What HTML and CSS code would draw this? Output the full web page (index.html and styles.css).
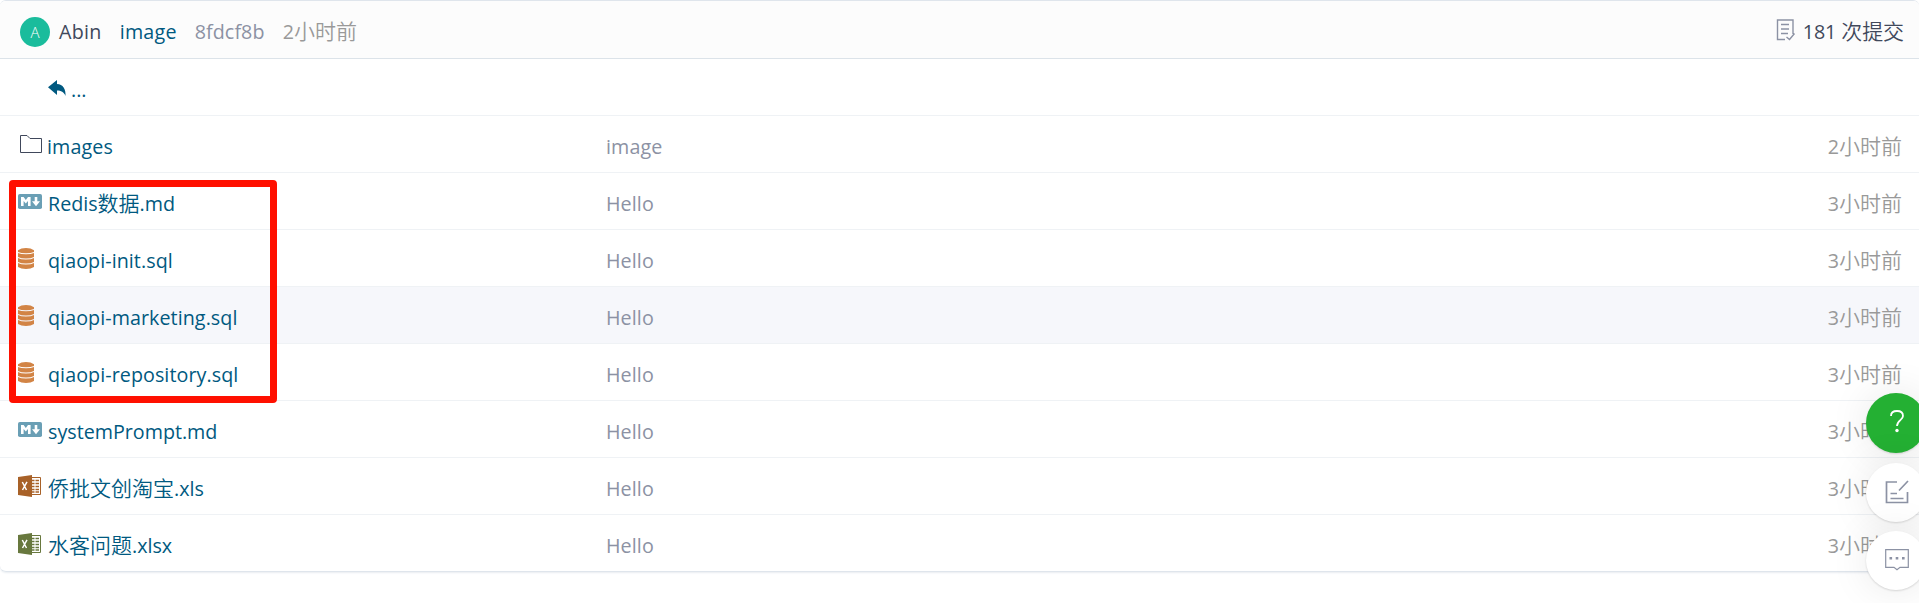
FILE: index.html
```html
<!DOCTYPE html>
<html lang="zh-CN">
<head>
<meta charset="utf-8">
<title>文件列表</title>
<link rel="stylesheet" href="styles.css">
</head>
<body>
<svg class="defs" width="0" height="0">
  <symbol id="md" viewBox="0 0 24 15"><rect width="24" height="15" rx="1.8" fill="#6a9fb5"/><path d="M3 12V3h2.6l2.2 3 2.2-3h2.6v9H10V7l-2.2 2.6L5.6 7v5zM16.700 3h2.600v4.300H22L18 12.300l-4-5h2.700z" fill="#fff"/></symbol>
  <symbol id="db" viewBox="0 0 16 21"><g fill="#d28445"><path d="M0 2.300Q3 0 8 0t8 2.300v1.700Q13 5.200 8 5.200T0 4z"/><path d="M0 5Q3 6.200 8 6.200T16 5v4Q13 10.500 8 10.500T0 9z"/><path d="M0 10Q3 11.500 8 11.500T16 10v4Q13 15.500 8 15.500T0 14z"/><path d="M0 15Q3 16.500 8 16.500T16 15v4Q13 21 8 21t-8-2z"/></g></symbol>
  <symbol id="xls" viewBox="0 0 23 22"><path d="M0 2 14 0v22L0 20z" fill="currentColor"/><path d="M14 2.500h8.500v17H14" fill="none" stroke="currentColor"/><path d="M14 5.500h2.500m1 0H21M14 8.500h2.500m1 0H21M14 11.500h2.500m1 0H21M14 14.500h2.500m1 0H21M14 17h2.500m1 0H21" stroke="currentColor" stroke-width="1.700"/><path d="m4.300 7 4.200 8M9 6.800 4.500 15" stroke="#fff" stroke-width="1.500"/></symbol>
</svg>
<main class="card">
  <header class="head">
    <span class="avatar">A</span>
    <span class="author">Abin</span>
    <a class="message">image</a>
    <span class="sha">8fdcf8b</span>
    <span class="ago">2<span class="cjk">小时前</span></span>
    <span class="commits">
      <svg width="20" height="22" viewBox="0 0 20 22" fill="none" stroke="#8c92a4" stroke-width="1.400"><path d="M17 15V1H1.500v19.500H9M5 5.500h8M5 10h8M5 14.500h7M10.500 18l3 2.500 5-6"/></svg>
      <span class="count">181 <span class="cjk">次提交</span></span>
    </span>
  </header>
  <div class="row up">
    <a class="name"><svg width="18" height="16" viewBox="0 0 18 16"><path d="M9 0v4c6 0 9 5 8.500 12C16 12 13 10.500 9 10.500V15L0 7.300z" fill="#005980"/></svg><span class="dots">...</span></a>
  </div>
  <div class="row"><a class="name"><svg class="icon folder" width="22" height="18" viewBox="0 0 22 18"><path d="M.5 17.500V.5H7l3 3h11.500v14z" fill="none" stroke="#40485b"/></svg><span>images</span></a><span class="note">image</span><span class="time">2<span class="cjk">小时前</span></span></div>
  <div class="row"><a class="name"><svg class="icon" width="24" height="15"><use href="#md"/></svg><span>Redis<span class="cjk">数据</span>.md</span></a><span class="note">Hello</span><span class="time">3<span class="cjk">小时前</span></span></div>
  <div class="row"><a class="name"><svg class="icon" width="16" height="21"><use href="#db"/></svg><span>qiaopi-init.sql</span></a><span class="note">Hello</span><span class="time">3<span class="cjk">小时前</span></span></div>
  <div class="row active"><a class="name"><svg class="icon" width="16" height="21"><use href="#db"/></svg><span>qiaopi-marketing.sql</span></a><span class="note">Hello</span><span class="time">3<span class="cjk">小时前</span></span></div>
  <div class="row"><a class="name"><svg class="icon" width="16" height="21"><use href="#db"/></svg><span>qiaopi-repository.sql</span></a><span class="note">Hello</span><span class="time">3<span class="cjk">小时前</span></span></div>
  <div class="row"><a class="name"><svg class="icon" width="24" height="15"><use href="#md"/></svg><span>systemPrompt.md</span></a><span class="note">Hello</span><span class="time">3<span class="cjk">小时前</span></span></div>
  <div class="row"><a class="name"><svg class="icon orange" width="23" height="22"><use href="#xls"/></svg><span><span class="cjk">侨批文创淘宝</span>.xls</span></a><span class="note">Hello</span><span class="time">3<span class="cjk">小时前</span></span></div>
  <div class="row"><a class="name"><svg class="icon olive" width="23" height="22"><use href="#xls"/></svg><span><span class="cjk">水客问题</span>.xlsx</span></a><span class="note">Hello</span><span class="time">3<span class="cjk">小时前</span></span></div>
</main>
<div class="highlight"></div>
<aside class="tools">
  <button class="tool help"><svg width="14" height="23" viewBox="0 0 14 23"><path d="M1 6C1 2.800 3.500 1 7 1s6 1.800 6 5c0 4-6 4.500-6 10" fill="none" stroke="#fff" stroke-width="1.800"/><circle cx="7" cy="20.500" r="1.700" fill="#fff"/></svg></button>
  <button class="tool"><svg width="24" height="24" viewBox="0 0 24 24" fill="none" stroke="#8c92a4" stroke-width="1.700"><path d="M12 2H1.500v20.500h21V12M5.500 13.500H12M5.500 18.500h13M14 10.500 23 1"/></svg></button>
  <button class="tool"><svg width="24" height="22" viewBox="0 0 24 22"><path d="M.7.7h22.600v17.600H15l-3 2.500-3-2.500H.7z" fill="none" stroke="#8c92a4" stroke-width="1.200"/><path d="M4.500 8h2.600v2.600H4.500zM10.700 8h2.600v2.600h-2.600zM17 8h2.600v2.600H17z" fill="#8c92a4"/></svg></button>
</aside>
</body>
</html>
```
FILE: styles.css
```css
* { box-sizing: border-box; }
body {
  margin: 0;
  height: 603px;
  overflow: hidden;
  background: #fff;
  font: 400 19.7px/28px "Open Sans", "Noto Sans", "Noto Sans CJK SC", sans-serif;
  color: #40485b;
}
.defs { position: absolute; }
.cjk { font-family: "Noto Sans CJK SC", sans-serif; font-size: 21px; font-weight: 350; line-height: 1; }
.card {
  height: 572px;
  border: 1px solid #dfe5ec;
  border-width: 1px 0;
  border-radius: 6px;
  box-shadow: 0 1px 2px #e9edf1;
  overflow: hidden;
}
.head {
  display: flex;
  align-items: center;
  height: 58px;
  padding: 4px 15px 0 20px;
  background: #fcfcfc;
  border-bottom: 1px solid #dce3e9;
}
.avatar {
  width: 30px;
  height: 30px;
  margin-top: 1px;
  border-radius: 50%;
  background: #1abc9c;
  color: #fff;
  font-size: 15px;
  font-weight: 300;
  line-height: 30px;
  text-align: center;
}
.author { margin-left: 9px; letter-spacing: 0.3px; }
.message { margin-left: 18px; color: #005980; letter-spacing: 0.2px; }
.sha { margin-left: 18px; color: #8c92a4; letter-spacing: 0.1px; }
.ago { margin-left: 18px; color: #999; }
.commits { display: flex; align-items: center; gap: 7px; margin-left: auto; }
.count { letter-spacing: -0.1px; }
.commits svg { margin-top: -4px; }
.row {
  display: grid;
  grid-template-columns: 588px 1fr auto;
  align-items: center;
  height: 57px;
  padding: 5px 17px 0 18px;
  border-bottom: 1px solid #eff2f5;
}
.row:last-child { border-bottom: 0; }
.active { background: #f6f7fb; }
.name { display: flex; align-items: center; color: #005980; }
.icon { margin: -5px 6px 0 0; }
.icon[width="16"] { margin-right: 14px; }
.icon[width="16"] + span { letter-spacing: 0.07px; }
.icon[width="23"] { margin-right: 7px; }
.folder { margin-left: 2px; margin-right: 5px; }
.folder + span { letter-spacing: 0.1px; }
.orange { color: #a86128; }
.olive { color: #68783e; }
.up .name { padding-left: 30px; gap: 5px; }
.up svg { margin-top: -4px; }
.note { color: #8c92a4; letter-spacing: 0.1px; }
.time { color: #999; }
.highlight {
  position: absolute;
  left: 8.500px;
  top: 179.500px;
  width: 268px;
  height: 223px;
  border: 7px solid #ff1000;
  border-radius: 4px;
}
.tools {
  position: absolute;
  left: 1866px;
  top: 393px;
  display: flex;
  flex-direction: column;
  gap: 9.500px;
}
.tool {
  display: flex;
  align-items: center;
  justify-content: center;
  width: 60px;
  height: 59px;
  padding: 0;
  border: 0;
  border-radius: 50%;
  background: #fff;
  box-shadow: 0 1px 2px #0002, 0 0 40px #00000018;
}
.tool svg { margin-left: 1px; margin-top: -1px; }
.help { height: 60px; background: #24b033; }
.help svg { margin-top: -3px; }
```
